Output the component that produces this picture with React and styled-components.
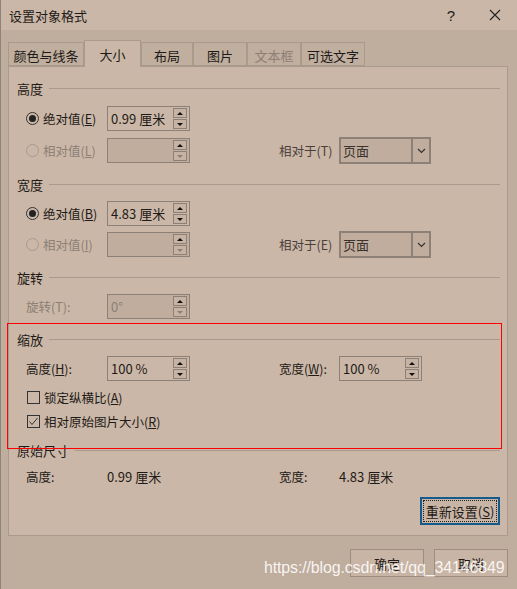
import React from 'react'
import styled, { createGlobalStyle } from 'styled-components'

const Global = createGlobalStyle`
  html, body { margin: 0; padding: 0; background: #bfad9d; }
  body { font-family: "Noto Sans CJK SC", "Microsoft YaHei", sans-serif; font-size: 12px; color: #1e1a17; }
`

const Window = styled.div`
  position: relative;
  width: 517px;
  height: 589px;
  display: flex;
  flex-direction: column;
  background: #bfad9d;
  border-left: 1px solid #8f8276;
  box-sizing: border-box;
  overflow: hidden;
`

const TitleBar = styled.div`
  height: 30px;
  flex: none;
  display: flex;
  align-items: center;
  background: #cbb7a7;
  padding-left: 8px;
  font-size: 13px;
`

const Title = styled.div`
  flex: 1;
`

const TitleBtn = styled.div`
  width: 44px;
  height: 30px;
  display: flex;
  align-items: center;
  justify-content: center;
  font-family: "Liberation Sans", sans-serif;
  font-size: 15px;
  color: #222;
`

const Body = styled.div`
  flex: 1;
  padding: 10px 9px 0 7px;
  display: flex;
  flex-direction: column;
`

const TabRow = styled.div`
  display: flex;
  align-items: flex-end;
  height: 26px;
  position: relative;
  z-index: 1;
`

const Tab = styled.div`
  width: ${p => p.w}px;
  height: ${p => (p.active ? 27 : 24)}px;
  box-sizing: border-box;
  display: flex;
  align-items: center;
  justify-content: center;
  font-size: 13px;
  color: ${p => (p.disabled ? '#8c7f75' : '#1e1a17')};
  background: ${p => (p.active ? '#cbb7a7' : '#c0ae9e')};
  border: 1px solid #a99a8b;
  border-bottom: ${p => (p.active ? 'none' : '1px solid #a99a8b')};
  margin-bottom: ${p => (p.active ? -1 : 0)}px;
  padding-top: ${p => (p.active ? 0 : 2)}px;
`

const Panel = styled.div`
  height: 470px;
  box-sizing: border-box;
  background: #cbb7a7;
  border: 1px solid #a99a8b;
  padding: 11px 7px 0 8px;
  display: flex;
  flex-direction: column;
`

const Section = styled.div`
  display: flex;
  align-items: center;
  height: 20px;
  margin-top: ${p => p.top || 0}px;
  font-size: 13px;
  &::after {
    content: '';
    flex: 1;
    height: 1px;
    background: #a99a8b;
    margin-left: 6px;
  }
`

const Row = styled.div`
  display: grid;
  grid-template-columns: 81px 172px 60px auto;
  align-items: center;
  height: ${p => p.h || 25}px;
  margin-top: ${p => p.top || 0}px;
  padding-left: 9px;
`

const Label = styled.div`
  display: flex;
  align-items: center;
  gap: 4px;
  white-space: nowrap;
  color: ${p => (p.disabled ? '#8c7f75' : p.muted ? '#4a403a' : '#1e1a17')};
  margin-left: ${p => p.shift || 0}px;
  font-size: 12.5px;
`

const Radio = styled.span`
  flex: none;
  width: 13px;
  height: 13px;
  box-sizing: border-box;
  border-radius: 50%;
  border: 1px solid ${p => (p.disabled ? '#a89a8e' : '#333')};
  display: inline-flex;
  align-items: center;
  justify-content: center;
  &::after {
    content: '';
    width: 7px;
    height: 7px;
    border-radius: 50%;
    background: ${p => (p.checked ? '#222' : 'transparent')};
  }
`

const SpinBox = styled.div`
  width: 83px;
  height: 25px;
  box-sizing: border-box;
  border: 1px solid #8c8077;
  background: ${p => (p.disabled ? '#c0ad9e' : '#cbb7a7')};
  display: flex;
  align-items: center;
  padding: 1px 2px 1px 3px;
  color: ${p => (p.disabled ? '#8c7f75' : '#1e1a17')};
  font-size: 13px;
`

const SpinText = styled.div`
  flex: 1;
`

const SpinBtns = styled.div`
  display: flex;
  flex-direction: column;
  gap: 1px;
  height: 21px;
`

const SpinBtn = styled.div`
  width: 14px;
  height: 10px;
  box-sizing: border-box;
  border: 1px solid #8c8077;
  background: #c7b3a3;
  display: flex;
  align-items: center;
  justify-content: center;
  &::after {
    content: '';
    border-left: 3px solid transparent;
    border-right: 3px solid transparent;
    ${p => (p.down ? 'border-top' : 'border-bottom')}: 3px solid ${p => (p.faded ? '#8c7f75' : '#111')};
  }
`

const Select = styled.div`
  width: 92px;
  height: 27px;
  box-sizing: border-box;
  border: 2px solid #8c8077;
  background: #c0ad9e;
  display: flex;
  align-items: center;
  font-size: 13px;
`

const SelectText = styled.div`
  flex: 1;
  padding-left: 2px;
  color: #3a322c;
`

const SelectArrow = styled.div`
  width: 16px;
  height: 100%;
  border-left: 2px solid #8c8077;
  display: flex;
  align-items: center;
  justify-content: center;
`

const Check = styled.span`
  flex: none;
  width: 13px;
  height: 13px;
  box-sizing: border-box;
  border: 1px solid #333;
  display: inline-flex;
  align-items: center;
  justify-content: center;
`

const Value = styled.div`
  font-size: 13px;
`

const ResetRow = styled.div`
  display: flex;
  justify-content: flex-end;
  margin-top: 11px;
`

const Button = styled.div`
  width: ${p => p.w || 74}px;
  height: 28px;
  box-sizing: border-box;
  border: ${p => (p.focus ? '2px solid #145a8c' : '1px solid #9c8d80')};
  background: #c9b5a5;
  display: flex;
  align-items: center;
  justify-content: center;
  font-size: 13px;
  padding: ${p => (p.focus ? '1px' : '0')};
`

const FocusRing = styled.div`
  width: 100%;
  height: 100%;
  box-sizing: border-box;
  border: 1px dotted #222;
  display: flex;
  align-items: center;
  justify-content: center;
`

const Footer = styled.div`
  display: flex;
  justify-content: flex-end;
  gap: 10px;
  margin-top: 13px;
`

const RedBox = styled.div`
  position: absolute;
  left: 6px;
  top: 323px;
  width: 495px;
  height: 126px;
  border: 1px solid #ff0000;
  box-sizing: border-box;
  pointer-events: none;
`

const Watermark = styled.div`
  position: absolute;
  left: 263px;
  top: 559px;
  font-family: "Liberation Sans", Arial, sans-serif;
  font-size: 16px;
  color: rgba(255, 255, 255, 0.88);
  letter-spacing: -0.15px;
  white-space: nowrap;
`

const Spin = ({ value, disabled }) => (
  <SpinBox disabled={disabled}>
    <SpinText>{value}</SpinText>
    <SpinBtns>
      <SpinBtn />
      <SpinBtn down faded={disabled} />
    </SpinBtns>
  </SpinBox>
)

const Dropdown = ({ value }) => (
  <Select>
    <SelectText>{value}</SelectText>
    <SelectArrow>
      <svg width="9" height="6" viewBox="0 0 9 6">
        <polyline points="1,1 4.5,4.5 8,1" fill="none" stroke="#333" strokeWidth="1.2" />
      </svg>
    </SelectArrow>
  </Select>
)

const tabs = [
  { name: '颜色与线条', w: 76 },
  { name: '大小', w: 57, active: true },
  { name: '布局', w: 52 },
  { name: '图片', w: 54 },
  { name: '文本框', w: 54, disabled: true },
  { name: '可选文字', w: 64 },
]

export default function App() {
  return (
    <>
      <Global />
      <Window>
        <TitleBar>
          <Title>设置对象格式</Title>
          <TitleBtn>?</TitleBtn>
          <TitleBtn>
            <svg width="12" height="12" viewBox="0 0 12 12">
              <path d="M1 1 L11 11 M11 1 L1 11" stroke="#222" strokeWidth="1.1" />
            </svg>
          </TitleBtn>
        </TitleBar>
        <Body>
          <TabRow>
            {tabs.map(t => (
              <Tab key={t.name} w={t.w} active={t.active} disabled={t.disabled}>{t.name}</Tab>
            ))}
          </TabRow>
          <Panel>
            <Section>高度</Section>
            <Row top={8}>
              <Label><Radio checked /><span>绝对值(<u>E</u>)</span></Label>
              <Spin value="0.99 厘米" />
            </Row>
            <Row top={6}>
              <Label disabled><Radio disabled /><span>相对值(<u>L</u>)</span></Label>
              <Spin disabled value="" />
              <Label muted>相对于(T)</Label>
              <Dropdown value="页面" />
            </Row>

            <Section top={12}>宽度</Section>
            <Row top={7}>
              <Label><Radio checked /><span>绝对值(<u>B</u>)</span></Label>
              <Spin value="4.83 厘米" />
            </Row>
            <Row top={5}>
              <Label disabled><Radio disabled /><span>相对值(<u>I</u>)</span></Label>
              <Spin disabled value="" />
              <Label muted>相对于(E)</Label>
              <Dropdown value="页面" />
            </Row>

            <Section top={11}>旋转</Section>
            <Row top={7}>
              <Label disabled>旋转(T):</Label>
              <Spin disabled value="0°" />
            </Row>

            <Section top={10}>缩放</Section>
            <Row top={7}>
              <Label><span>高度(<u>H</u>):</span></Label>
              <Spin value="100 %" />
              <Label><span>宽度(<u>W</u>):</span></Label>
              <Spin value="100 %" />
            </Row>
            <Row top={6} h={20}>
              <Label shift={1}><Check /><span>锁定纵横比(<u>A</u>)</span></Label>
            </Row>
            <Row top={4} h={20}>
              <Label shift={1}>
                <Check>
                  <svg width="11" height="11" viewBox="0 0 11 11">
                    <polyline points="1.5,5.5 4,8.5 9.5,2" fill="none" stroke="#333" strokeWidth="1" />
                  </svg>
                </Check>
                <span>相对原始图片大小(<u>R</u>)</span>
              </Label>
            </Row>

            <Section top={9}>原始尺寸</Section>
            <Row top={6} h={20}>
              <Label>高度:</Label>
              <Value>0.99 厘米</Value>
              <Label>宽度:</Label>
              <Value>4.83 厘米</Value>
            </Row>
            <ResetRow>
              <Button w={80} focus>
                <FocusRing><span>重新设置(<u>S</u>)</span></FocusRing>
              </Button>
            </ResetRow>
          </Panel>
          <Footer>
            <Button>确定</Button>
            <Button>取消</Button>
          </Footer>
        </Body>
        <RedBox />
        <Watermark>https://blog.csdn.net/qq_34146849</Watermark>
      </Window>
    </>
  )
}
